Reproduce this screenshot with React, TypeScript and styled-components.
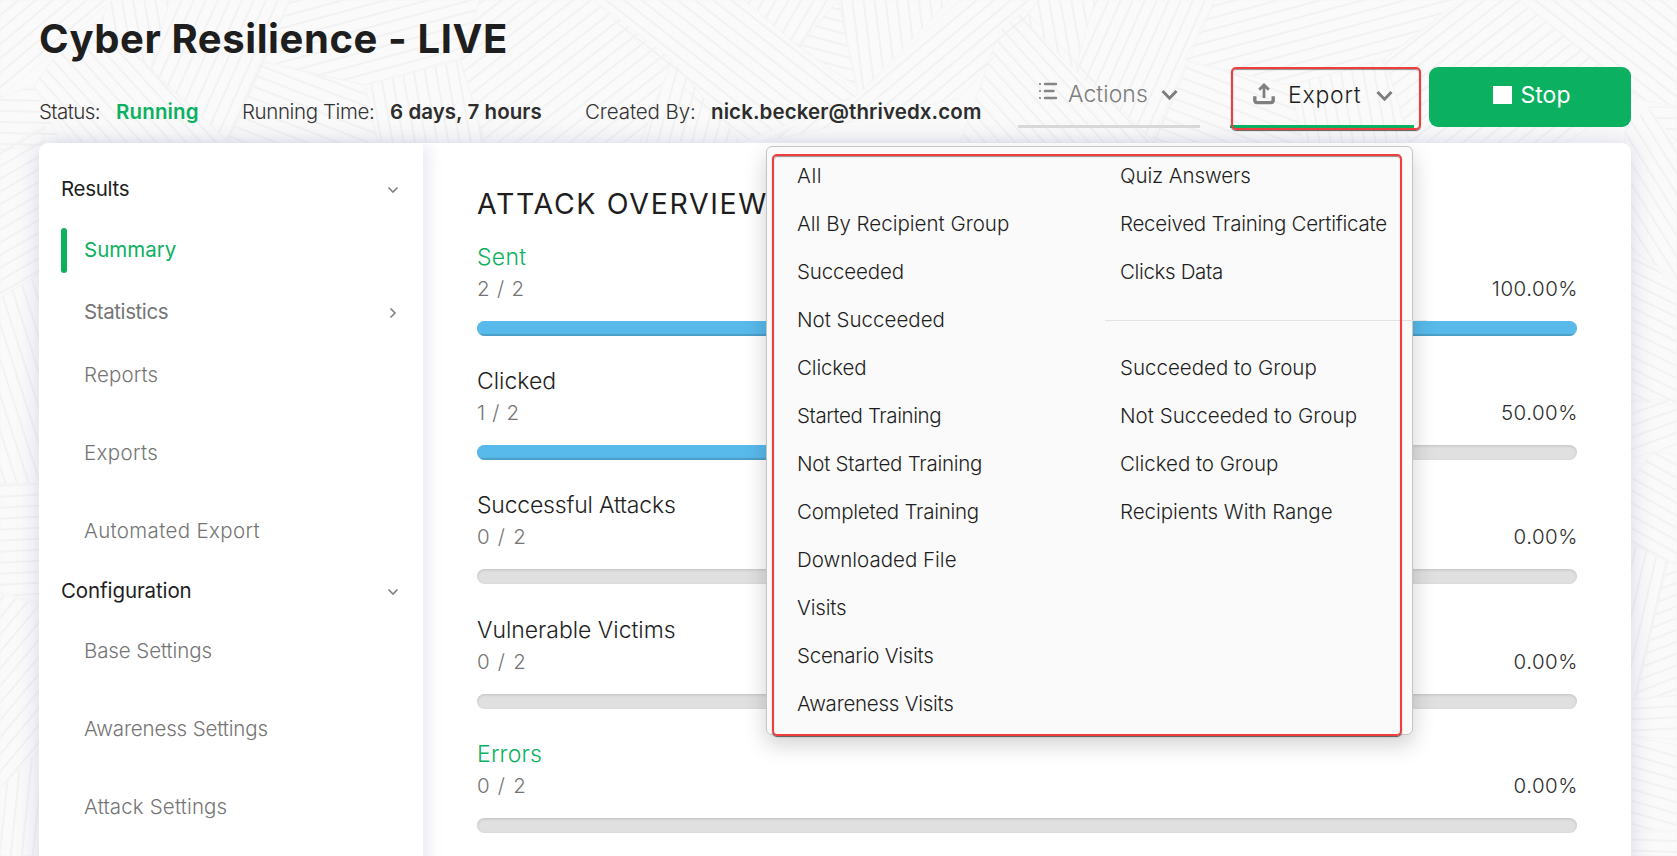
import React from 'react';
import styled, { createGlobalStyle } from 'styled-components';

const GREEN = '#0bb161';

const GlobalStyle = createGlobalStyle`
  *, *::before, *::after { box-sizing: border-box; }
  html, body { margin: 0; padding: 0; }
  body {
    background: #fafafa;
    font-family: Inter, "Liberation Sans", sans-serif;
    font-size: 20.5px;
    font-weight: 340;
    line-height: 26px;
    color: #212121;
    overflow: hidden;
  }
`;

const Page = styled.div`
  position: relative;
  display: flex;
  flex-direction: column;
  width: 100%;
  height: 856px;
  padding: 0 46px 0 39px;
  overflow: hidden;
`;

const Backdrop = styled.svg`
  position: absolute;
  top: 0;
  left: 0;
  width: 1677px;
  height: 856px;
`;

const Header = styled.header`
  position: relative;
  z-index: 2;
  display: flex;
  justify-content: space-between;
  align-items: flex-start;
  flex: 0 0 143px;
`;

const Title = styled.h1`
  margin: 15px 0 36px;
  font-size: 40px;
  line-height: 48px;
  font-weight: 700;
  letter-spacing: 0.6px;
  color: #1e1e1e;
`;

const StatusRow = styled.div`
  display: flex;
  white-space: nowrap;
`;

const StatusItem = styled.div<{ $width: number }>`
  display: flex;
  width: ${(p) => p.$width}px;
  color: #333;
`;

const StatusLabel = styled.span<{ $width: number; $track: number }>`
  width: ${(p) => p.$width}px;
  letter-spacing: ${(p) => p.$track}px;
`;

const StatusValue = styled.strong<{ $green?: boolean; $track: number }>`
  font-weight: 600;
  letter-spacing: ${(p) => p.$track}px;
  color: ${(p) => (p.$green ? GREEN : '#2d2d2d')};
`;

const Toolbar = styled.div`
  display: flex;
  padding-top: 67px;
`;

const ToolButton = styled.div<{ $active?: boolean }>`
  position: relative;
  display: flex;
  align-items: center;
  width: ${(p) => (p.$active ? 184 : 182)}px;
  height: 61px;
  margin-right: ${(p) => (p.$active ? 15 : 30)}px;
  padding: 0 0 ${(p) => (p.$active ? 3 : 5)}px ${(p) => (p.$active ? 23 : 20)}px;
  border-bottom: 3px solid ${(p) => (p.$active ? GREEN : '#d8d8d8')};
  font-size: 23px;
  color: ${(p) => (p.$active ? '#1e1e1e' : '#7d7d7d')};
`;

const ToolLabel = styled.span<{ $width: number; $gap: number; $track: number }>`
  width: ${(p) => p.$width}px;
  margin-left: ${(p) => p.$gap}px;
  letter-spacing: ${(p) => p.$track}px;
`;

const ToolIcon = styled.svg<{ $drop?: number }>`
  flex: none;
  display: block;
  margin-top: ${(p) => p.$drop ?? 0}px;
`;

const StopButton = styled.button`
  display: flex;
  align-items: center;
  justify-content: center;
  gap: 9px;
  width: 202px;
  height: 60px;
  padding: 0 0 4px 3px;
  border: 0;
  border-radius: 9px;
  background: ${GREEN};
  color: #fff;
  font: 400 23px/28px Inter, "Liberation Sans", sans-serif;
`;

const StopSquare = styled.span`
  width: 19px;
  height: 18px;
  margin-top: -1px;
  background: #fff;
`;

const Highlight = styled.div<{ $box: string }>`
  position: absolute;
  inset: ${(p) => p.$box};
  border: 2px solid #f03e3e;
  border-radius: 5px;
  box-shadow: 0 1px 1px rgba(40, 40, 40, 0.75), inset 0 1px 1px rgba(40, 40, 40, 0.5);
  pointer-events: none;
`;

const Menu = styled.div`
  position: absolute;
  top: 79px;
  left: -464px;
  display: grid;
  grid-template-columns: 338px 322px;
  width: 647px;
  height: 589px;
  padding-top: 5px;
  border: 1px solid #c4c6c4;
  border-radius: 6px;
  background: #fafafa;
  box-shadow: 0 9px 22px rgba(0, 0, 0, 0.19);
  font-size: 20.5px;
  color: #1e1e1e;
`;

const MenuColumn = styled.div<{ $pad: number }>`
  display: flex;
  flex-direction: column;
  padding-left: ${(p) => p.$pad}px;
`;

const MenuItem = styled.div<{ $track: number }>`
  height: 48px;
  line-height: 48px;
  white-space: nowrap;
  letter-spacing: ${(p) => p.$track}px;
`;

const MenuDivider = styled.div`
  flex: 0 0 1px;
  margin: 24px 0 23px -15px;
  background: #e2e4e3;
`;

const Card = styled.div`
  position: relative;
  display: flex;
  flex: none;
  height: 760px;
  border-radius: 9px;
  background: #fff;
  box-shadow: 0 0 22px rgba(120, 120, 190, 0.26);
`;

const Sidebar = styled.nav`
  flex: 0 0 384px;
  padding-top: 24px;
  border-radius: 9px 0 0 9px;
  box-shadow: 10px 0 14px -4px rgba(120, 120, 190, 0.16);
`;

const GroupHeading = styled.div<{ $first?: boolean; $track: number }>`
  display: flex;
  justify-content: space-between;
  align-items: center;
  height: 45px;
  margin-top: ${(p) => (p.$first ? 0 : 15)}px;
  padding: 0 24px 1px 22px;
  font-weight: 400;
  letter-spacing: ${(p) => p.$track}px;
  color: #1e1e1e;
`;

const NavItem = styled.div<{ $gap: number; $track: number; $medium?: boolean }>`
  display: flex;
  justify-content: space-between;
  align-items: center;
  height: 45px;
  margin: ${(p) => p.$gap}px 0 0 22px;
  padding: 0 24px 1px 23px;
  font-weight: ${(p) => (p.$medium ? 400 : 340)};
  letter-spacing: ${(p) => p.$track}px;
  color: #757575;
`;

const Marker = styled.span`
  flex: none;
  width: 6px;
  height: 45px;
  margin: 2px 17px 0 0;
  border-radius: 3px;
  background: ${GREEN};
`;

const ActiveItem = styled.div`
  display: flex;
  align-items: center;
  height: 45px;
  margin: 15px 0 0 22px;
  font-weight: 400;
  color: ${GREEN};
`;

const Main = styled.main`
  flex: 1;
  padding: 43px 54px 0;
`;

const SectionTitle = styled.h2`
  margin: 0 0 19px;
  font-size: 28.5px;
  line-height: 36px;
  font-weight: 400;
  letter-spacing: 1.65px;
  color: #1e1e1e;
`;

const Stats = styled.div`
  display: flex;
  flex-direction: column;
  gap: 29.2px;
`;

const StatLabel = styled.div<{ $green?: boolean; $track: number }>`
  font-size: 23px;
  line-height: 32px;
  letter-spacing: ${(p) => p.$track}px;
  color: ${(p) => (p.$green ? GREEN : '#1e1e1e')};
`;

const StatNumbers = styled.div`
  display: flex;
  justify-content: space-between;
  margin: 3px 0 19px;
  color: #2d2d2d;
`;

const StatCount = styled.span<{ $track: number }>`
  color: #757575;
  letter-spacing: ${(p) => p.$track}px;
`;

const StatPercent = styled.span`
  margin-right: -1px;
  letter-spacing: 0.5px;
`;

const Track = styled.div`
  height: 15px;
  border-radius: 8px;
  overflow: hidden;
  background: #e0e0e0;
  box-shadow: inset 0 1px 3px rgba(0, 0, 0, 0.14);
`;

const Fill = styled.div`
  height: 15px;
  background: #58baea;
  box-shadow: inset 0 -2px 1px rgba(0, 0, 0, 0.15);
`;

type Patch = { points: string; angle: number };

// Hatched patches of the page backdrop: the strip above the card and both side margins.
const patches: Patch[] = [
  { points: '0,0 112,0 0,98', angle: -40 },
  { points: '0,98 34,85 60,143 0,150', angle: 1 },
  { points: '34,85 72,35 100,20 230,143 72,143', angle: 48 },
  { points: '112,0 170,0 150,70 100,20', angle: 80 },
  { points: '170,0 290,0 230,143 150,70', angle: -66 },
  { points: '290,0 480,0 460,58 365,85 260,60', angle: -15 },
  { points: '260,62 365,85 378,143 225,143', angle: 21 },
  { points: '365,85 460,60 485,143 378,143', angle: 80 },
  { points: '480,0 594,0 672,60 640,143 485,143 460,58', angle: -38 },
  { points: '594,0 744,0 858,95 740,143', angle: 38 },
  { points: '672,60 742,143 640,143', angle: -75 },
  { points: '744,0 838,0 800,48', angle: -60 },
  { points: '838,0 858,88 798,45', angle: 15 },
  { points: '838,0 950,0 858,95', angle: 83 },
  { points: '858,95 960,0 1040,0 960,98 760,143', angle: -40 },
  { points: '1000,30 1025,10 1155,143 960,143', angle: 48 },
  { points: '1037,0 1095,0 1075,70 1025,20', angle: 80 },
  { points: '1095,0 1215,0 1155,143 1075,70', angle: -66 },
  { points: '1215,0 1460,0 1385,58 1290,85 1185,60', angle: -15 },
  { points: '1187,62 1290,85 1303,143 1150,143', angle: 21 },
  { points: '1290,85 1385,60 1410,143 1303,143', angle: 80 },
  { points: '1465,0 1519,0 1640,95 1565,143 1410,143 1385,58', angle: -38 },
  { points: '1519,0 1677,0 1677,107 1642,100', angle: 38 },
  { points: '1648,107 1677,107 1677,143', angle: 1 },
  { points: '1648,107 1677,150 1677,280 1625,245 1625,130', angle: 58 },
  { points: '1625,245 1677,285 1677,405 1625,400', angle: 26 },
  { points: '1625,400 1677,400 1677,445 1625,460', angle: -20 },
  { points: '1652,452 1677,455 1677,565 1625,540 1625,490', angle: 29 },
  { points: '1625,540 1668,562 1635,700 1625,700', angle: -77 },
  { points: '1668,562 1677,562 1677,695 1635,700', angle: -21 },
  { points: '1625,700 1677,695 1677,740 1625,735', angle: -3 },
  { points: '1625,735 1677,745 1677,830 1625,830', angle: 16 },
  { points: '1625,832 1677,832 1677,856 1625,856', angle: 2 },
  { points: '0,150 45,125 45,270 0,298', angle: -30 },
  { points: '0,298 45,270 45,483 0,483', angle: 72 },
  { points: '0,484 45,484 45,604 0,592', angle: -3 },
  { points: '0,594 45,606 45,745 0,788', angle: -50 },
  { points: '0,788 45,745 45,856 0,856', angle: -84 },
];

const HatchedBackdrop = () => (
  <Backdrop viewBox="0 0 1677 856">
    <defs>
      {patches.map((p, i) => (
        <pattern key={i} id={`hatch${i}`} width="40" height="11" patternUnits="userSpaceOnUse" patternTransform={`rotate(${p.angle})`}>
          <rect width="40" height="2" fill="#f2f2f2" />
        </pattern>
      ))}
    </defs>
    {patches.map((p, i) => (
      <polygon key={i} points={p.points} fill={`url(#hatch${i})`} stroke="#f5f5f5" strokeWidth="1" />
    ))}
  </Backdrop>
);

const ToolChevron = () => (
  <ToolIcon width="17" height="12" viewBox="0 0 17 12" $drop={2}>
    <path d="M1.5 2 L8.5 9.2 L15.5 2" fill="none" stroke="#7d7d7d" strokeWidth="3" />
  </ToolIcon>
);

const NavChevron = ({ right }: { right?: boolean }) => (
  <ToolIcon width="12" height="12" viewBox="0 0 12 12" $drop={2}>
    <path d={right ? 'M3.5 1.5 L8 6 L3.5 10.5' : 'M1.5 3.5 L6 8 L10.5 3.5'} fill="none" stroke="#808080" strokeWidth="1.6" />
  </ToolIcon>
);

const ListIcon = () => (
  <ToolIcon width="20" height="18" viewBox="0 0 20 18" $drop={-5}>
    <g stroke="#868686" strokeWidth="2.4" strokeLinecap="round">
      <path d="M7 2H18M7 9H15.5M7 16H18" />
      <path d="M1.9 2H2.1M1.9 9H2.1M1.9 16H2.1" strokeWidth="2" />
    </g>
  </ToolIcon>
);

const UploadIcon = () => (
  <ToolIcon width="22" height="22" viewBox="0 0 22 22" $drop={-2}>
    <path d="M11 15V3M6.2 6.8L11 2L15.8 6.8" fill="none" stroke="#808080" strokeWidth="2.8" />
    <path d="M1.8 13.2V17.2Q1.8 19.6 4.2 19.6H17.8Q20.2 19.6 20.2 17.2V13.2" fill="none" stroke="#808080" strokeWidth="3.4" />
  </ToolIcon>
);

type Entry = [string, number];

const menuLeft: Entry[] = [
  ['All', 0.6],
  ['All By Recipient Group', 0],
  ['Succeeded', -0.15],
  ['Not Succeeded', 0],
  ['Clicked', -0.15],
  ['Started Training', -0.4],
  ['Not Started Training', -0.25],
  ['Completed Training', -0.25],
  ['Downloaded File', 0],
  ['Visits', -0.15],
  ['Scenario Visits', -0.25],
  ['Awareness Visits', -0.25],
];

const menuRight: Entry[] = [
  ['Quiz Answers', -0.1],
  ['Received Training Certificate', -0.25],
  ['Clicks Data', -0.35],
];

const menuGroup: Entry[] = [
  ['Succeeded to Group', 0],
  ['Not Succeeded to Group', 0.03],
  ['Clicked to Group', -0.05],
  ['Recipients With Range', -0.03],
];

const stats = [
  { label: 'Sent', track: 0.3, green: true, count: '2 / 2', countTrack: 0.8, percent: '100.00%', value: 100 },
  { label: 'Clicked', track: 0, count: '1 / 2', countTrack: 0.7, percent: '50.00%', value: 50 },
  { label: 'Successful Attacks', track: -0.2, count: '0 / 2', countTrack: 1.2, percent: '0.00%', value: 0 },
  { label: 'Vulnerable Victims', track: -0.03, count: '0 / 2', countTrack: 1.2, percent: '0.00%', value: 0 },
  { label: 'Errors', track: 0.2, green: true, count: '0 / 2', countTrack: 1.2, percent: '0.00%', value: 0 },
];

const renderItems = (items: Entry[]) =>
  items.map(([text, track]) => (
    <MenuItem key={text} $track={track}>
      {text}
    </MenuItem>
  ));

export default function App() {
  return (
    <>
      <GlobalStyle />
      <Page>
        <HatchedBackdrop />
        <Header>
          <div>
            <Title>Cyber Resilience - LIVE</Title>
            <StatusRow>
              <StatusItem $width={203}>
                <StatusLabel $width={77} $track={-0.6}>Status:</StatusLabel>
                <StatusValue $green $track={0.15}>Running</StatusValue>
              </StatusItem>
              <StatusItem $width={343}>
                <StatusLabel $width={148} $track={-0.4}>Running Time:</StatusLabel>
                <StatusValue $track={0.05}>6 days, 7 hours</StatusValue>
              </StatusItem>
              <StatusItem $width={400}>
                <StatusLabel $width={126} $track={-0.1}>Created By:</StatusLabel>
                <StatusValue $track={0.1}>nick.becker@thrivedx.com</StatusValue>
              </StatusItem>
            </StatusRow>
          </div>
          <Toolbar>
            <ToolButton>
              <ListIcon />
              <ToolLabel $width={93} $gap={10} $track={0.05}>Actions</ToolLabel>
              <ToolChevron />
            </ToolButton>
            <ToolButton $active>
              <UploadIcon />
              <ToolLabel $width={88} $gap={13} $track={0.75}>Export</ToolLabel>
              <ToolChevron />
              <Highlight $box="0 -7px -5px 1px" />
              <Menu>
                <MenuColumn $pad={30}>{renderItems(menuLeft)}</MenuColumn>
                <MenuColumn $pad={15}>
                  {renderItems(menuRight)}
                  <MenuDivider />
                  {renderItems(menuGroup)}
                </MenuColumn>
                <Highlight $box="7px 10px -2px 5px" />
              </Menu>
            </ToolButton>
            <StopButton>
              <StopSquare />
              Stop
            </StopButton>
          </Toolbar>
        </Header>
        <Card>
          <Sidebar>
            <GroupHeading $first $track={-0.3}>
              Results
              <NavChevron />
            </GroupHeading>
            <ActiveItem>
              <Marker />
              Summary
            </ActiveItem>
            <NavItem $gap={18} $track={-0.4} $medium>
              Statistics
              <NavChevron right />
            </NavItem>
            <NavItem $gap={18} $track={0.15}>Reports</NavItem>
            <NavItem $gap={33} $track={0.35}>Exports</NavItem>
            <NavItem $gap={33} $track={0.35}>Automated Export</NavItem>
            <GroupHeading $track={-0.1}>
              Configuration
              <NavChevron />
            </GroupHeading>
            <NavItem $gap={15} $track={-0.1}>Base Settings</NavItem>
            <NavItem $gap={33} $track={-0.15}>Awareness Settings</NavItem>
            <NavItem $gap={33} $track={0.15}>Attack Settings</NavItem>
          </Sidebar>
          <Main>
            <SectionTitle>ATTACK OVERVIEW</SectionTitle>
            <Stats>
              {stats.map((s) => (
                <div key={s.label}>
                  <StatLabel $green={s.green} $track={s.track}>{s.label}</StatLabel>
                  <StatNumbers>
                    <StatCount $track={s.countTrack}>{s.count}</StatCount>
                    <StatPercent>{s.percent}</StatPercent>
                  </StatNumbers>
                  <Track>
                    <Fill style={{ width: `${s.value}%` }} />
                  </Track>
                </div>
              ))}
            </Stats>
          </Main>
        </Card>
      </Page>
    </>
  );
}
